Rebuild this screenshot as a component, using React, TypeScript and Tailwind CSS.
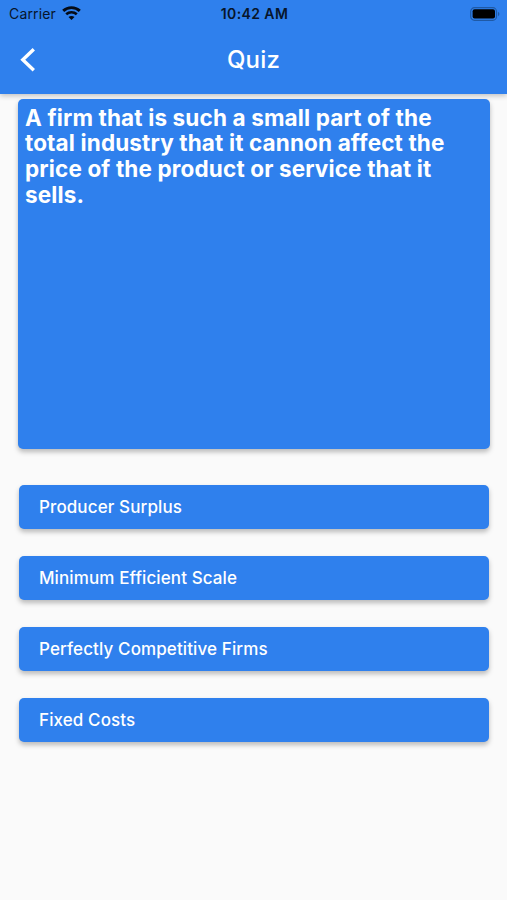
const QUESTION_LINES = [
  'A firm that is such a small part of the',
  'total industry that it cannon affect the',
  'price of the product or service that it',
  'sells.',
]

const ANSWERS = [
  'Producer Surplus',
  'Minimum Efficient Scale',
  'Perfectly Competitive Firms',
  'Fixed Costs',
]

function WifiIcon() {
  return (
    <svg width="19" height="15" viewBox="0 0 19 15" fill="none" stroke="#050b16">
      <path d="M1.2 4.9C5.9.5 13.1.5 17.8 4.9" strokeWidth="2.9" />
      <path d="M4.2 8.3C7.2 5.5 11.8 5.5 14.8 8.3" strokeWidth="2.6" />
      <path d="M9.5 14.1 6.5 11.1C8.2 9.6 10.8 9.6 12.5 11.1Z" fill="#050b16" stroke="none" />
    </svg>
  )
}

function BatteryIcon() {
  return (
    <svg width="30" height="14" viewBox="0 0 30 14">
      <rect x="0.7" y="0.7" width="25.8" height="12.6" rx="3.8" fill="none" stroke="#1f59a5" strokeWidth="1.2" />
      <rect x="2.6" y="2.3" width="22.4" height="9.2" rx="2" fill="#000" />
      <path d="M28 4.8C29.9 5.6 29.9 8.4 28 9.2Z" fill="#1f59a5" />
    </svg>
  )
}

function StatusBar() {
  return (
    <div className="grid h-[27px] grid-cols-3 items-center pl-[9px] pr-[7px] text-[#07152b]">
      <div className="flex items-center gap-[6px]">
        <span className="text-[14px] tracking-[0.16px]">Carrier</span>
        <WifiIcon />
      </div>
      <span className="text-center text-[14px] font-semibold tracking-[0.42px]">10:42 AM</span>
      <div className="flex justify-end">
        <BatteryIcon />
      </div>
    </div>
  )
}

export default function App() {
  return (
    <div className="min-h-[900px] w-full bg-[#fafafa] font-['Inter','Liberation_Sans',sans-serif]">
      <header className="h-[94px] bg-[#2f80ed] shadow-[0_2px_5px_rgba(0,0,0,0.22)]">
        <StatusBar />
        <div className="grid h-[66px] grid-cols-[80px_1fr_80px] items-center">
          <button className="pl-5" aria-label="Back">
            <svg width="16" height="26" viewBox="0 0 16 26" fill="none" stroke="#fff" strokeWidth="3.4">
              <path d="M13.8 2.2 2.8 12.7 13.8 23.2" />
            </svg>
          </button>
          <h1 className="text-center text-[24px] font-medium tracking-[0.2px] text-white">Quiz</h1>
        </div>
      </header>

      <main className="pl-[18px] pr-[17.5px] pt-[4.5px]">
        {/* Question */}
        <section className="h-[350px] rounded-[5px] bg-[#2f80ed] px-[7px] pt-[6px] shadow-[0_3px_5px_rgba(0,0,0,0.26)]">
          {QUESTION_LINES.map((line) => (
            <p key={line} className="whitespace-nowrap text-[22.5px] font-bold leading-[25.7px] tracking-[0.14px] text-white">
              {line}
            </p>
          ))}
        </section>

        {/* Answers */}
        <div className="mt-[36.5px] flex flex-col gap-[27px] px-px">
          {ANSWERS.map((answer) => (
            <button
              key={answer}
              className="h-11 rounded-[5px] bg-[#2f80ed] pl-5 pt-0.5 text-left text-[17px] font-medium tracking-[0.11px] text-white shadow-[0_3px_5px_rgba(0,0,0,0.26)]"
            >
              {answer}
            </button>
          ))}
        </div>
      </main>
    </div>
  )
}
